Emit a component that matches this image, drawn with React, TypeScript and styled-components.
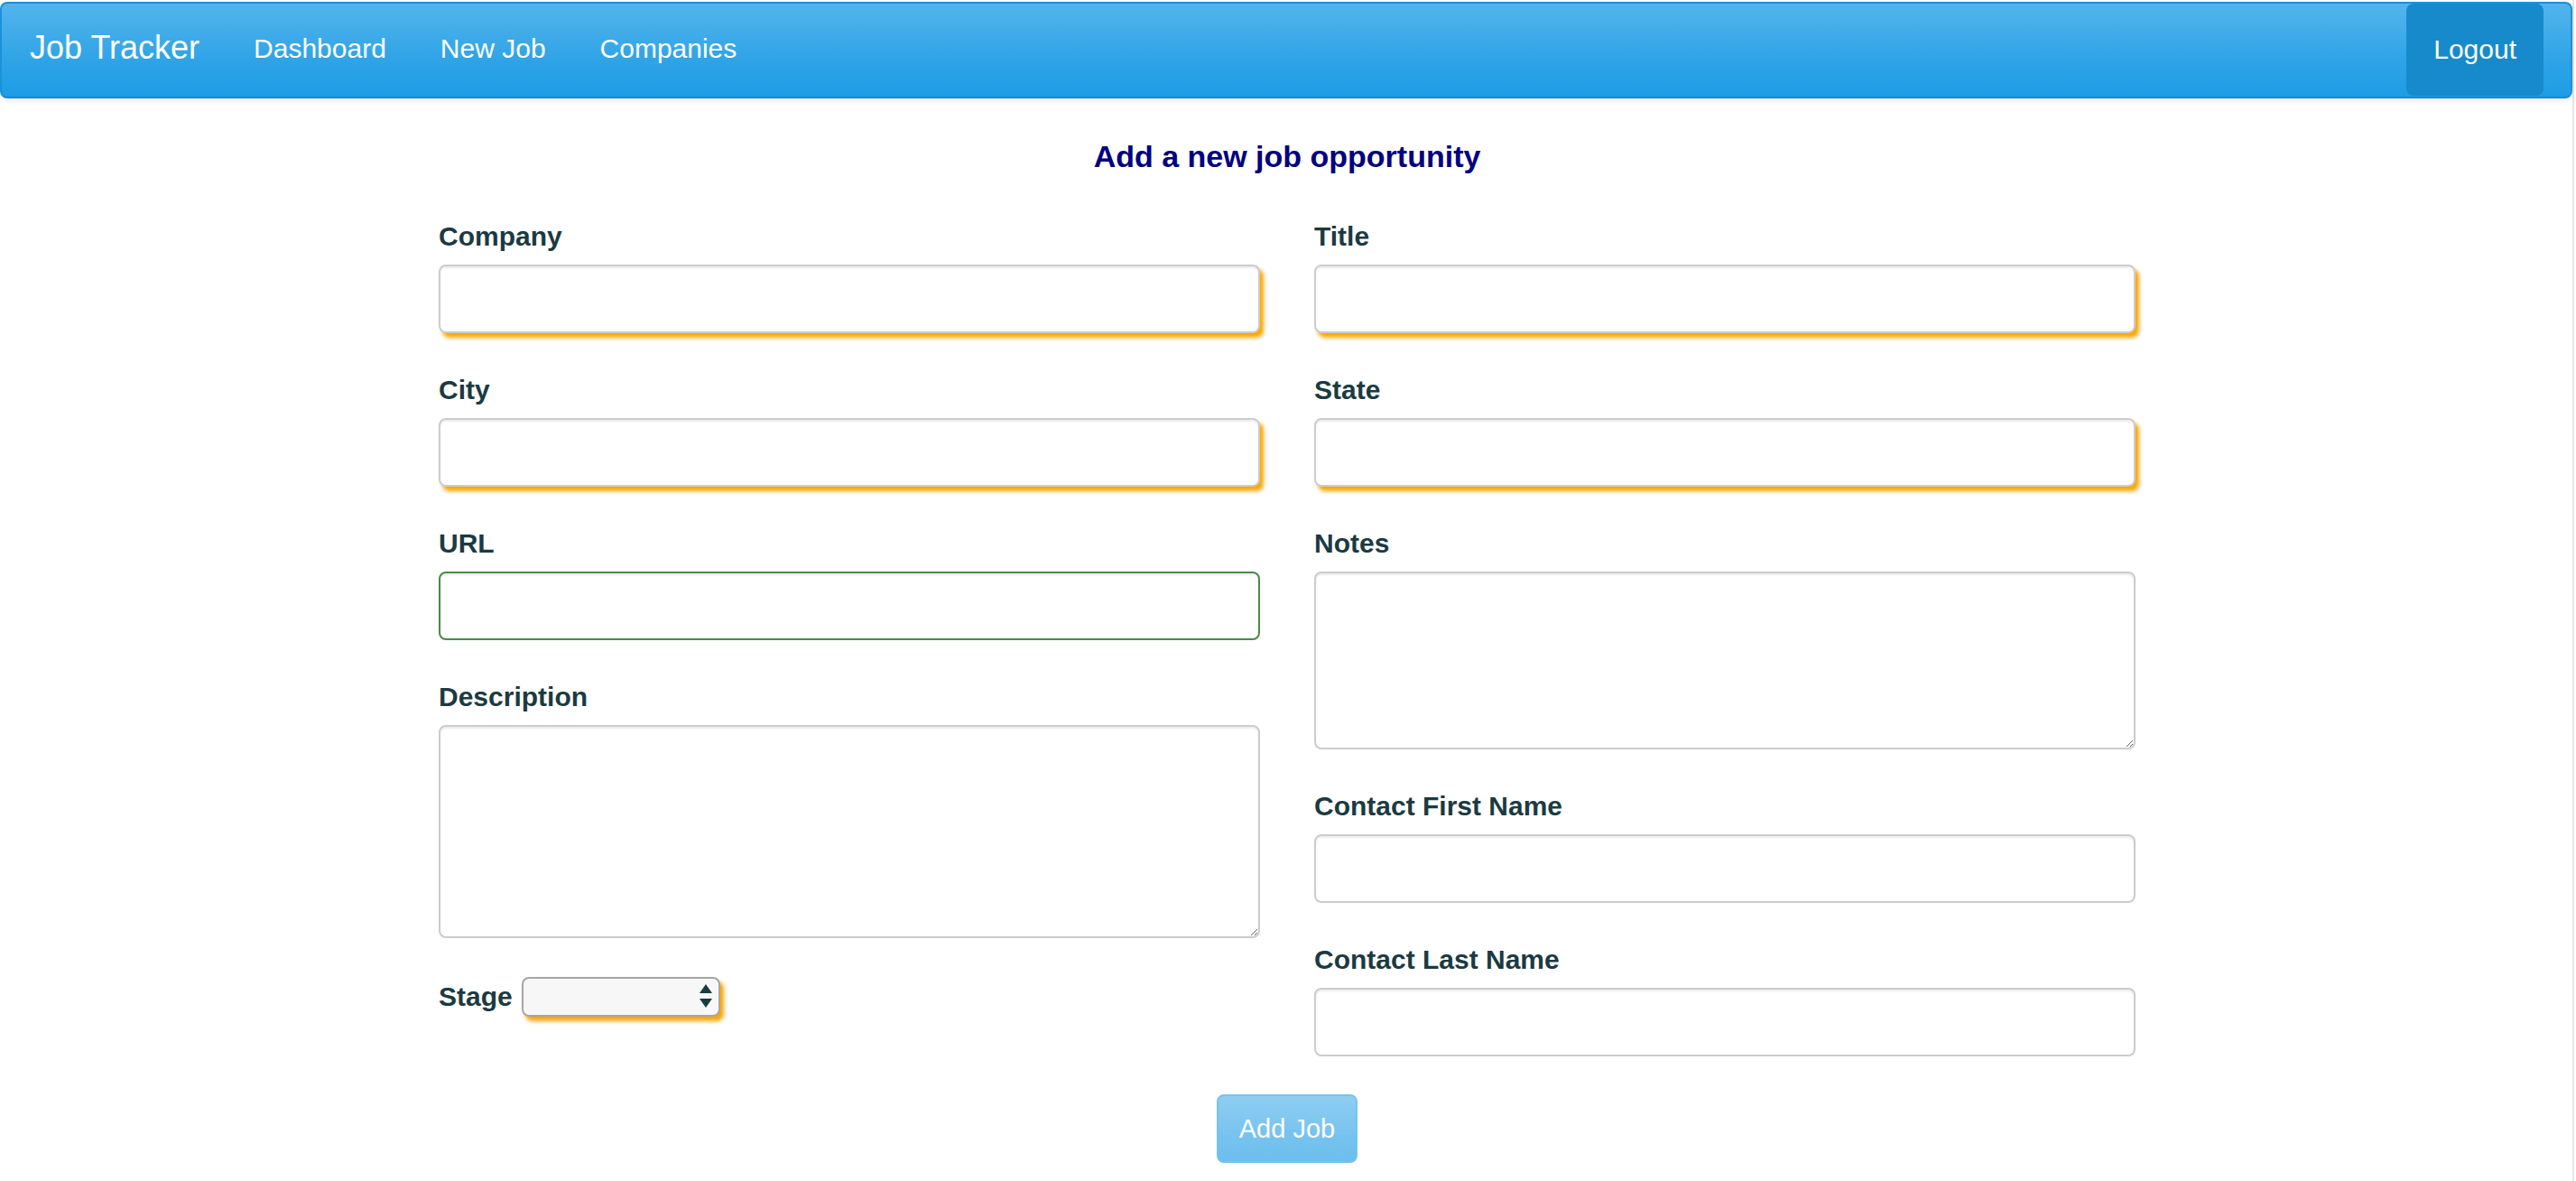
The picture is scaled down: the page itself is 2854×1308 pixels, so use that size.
import React from 'react';
import styled, { createGlobalStyle, css } from 'styled-components';

const GlobalStyle = createGlobalStyle`
  html, body {
    margin: 0;
    padding: 0;
    background: #fff;
  }
  body {
    font-family: 'Liberation Sans', Arial, Helvetica, sans-serif;
    color: #1b3a41;
  }
  * {
    box-sizing: border-box;
  }
`;

const navLinks = ['Dashboard', 'New Job', 'Companies'];

interface FieldProps {
  label: string;
  glow?: boolean;
  success?: boolean;
  height?: number;
}

const Field = ({ label, glow = false, success = false, height }: FieldProps) => (
  <Group>
    <Label>{label}</Label>
    {height ? (
      <TextArea $height={height} />
    ) : (
      <Input type="text" $glow={glow} $success={success} />
    )}
  </Group>
);

const App = () => {
  return (
    <Page>
      <GlobalStyle />
      <Navbar>
        <Brand>Job Tracker</Brand>
        <NavList>
          {navLinks.map((link) => (
            <NavItem key={link}>{link}</NavItem>
          ))}
        </NavList>
        <Logout>Logout</Logout>
      </Navbar>
      <Main>
        <Heading>Add a new job opportunity</Heading>
        <Form onSubmit={(e) => e.preventDefault()}>
          <Columns>
            <Column>
              <Field label="Company" glow />
              <Field label="City" glow />
              <Field label="URL" success />
              <Field label="Description" height={236} />
              <StageRow>
                <InlineLabel>Stage</InlineLabel>
                <SelectWrap>
                  <Select defaultValue="">
                    <option value="" />
                    <option value="applied">Applied</option>
                    <option value="interview">Interview</option>
                    <option value="offer">Offer</option>
                  </Select>
                  <Arrows width="16" height="30" viewBox="0 0 16 30">
                    <path d="M8 1 L15 11 L1 11 Z" fill="#1b3a41" />
                    <path d="M1 17 L15 17 L8 27 Z" fill="#1b3a41" />
                  </Arrows>
                </SelectWrap>
              </StageRow>
            </Column>
            <Column>
              <Field label="Title" glow />
              <Field label="State" glow />
              <Field label="Notes" height={197} />
              <Field label="Contact First Name" />
              <Field label="Contact Last Name" />
            </Column>
          </Columns>
          <ButtonRow>
            <AddButton type="submit" disabled>
              Add Job
            </AddButton>
          </ButtonRow>
        </Form>
      </Main>
    </Page>
  );
};

export default App;

const Page = styled.div`
  width: 2852px;
  min-height: 100vh;
  padding-top: 2px;
  border-right: 2px solid #e6e6e6;
`;

const Navbar = styled.nav`
  display: flex;
  align-items: stretch;
  width: 2850px;
  height: 107px;
  background-image: linear-gradient(#54b4eb, #2fa4e7 60%, #1d9ce5);
  border: 2px solid #1a91d9;
  border-bottom-color: #178acc;
  border-radius: 8px;
  box-shadow: 0 3px 6px rgba(0, 0, 0, 0.08);
`;

const Brand = styled.a`
  display: flex;
  align-items: center;
  padding: 0 30px 5px 31px;
  font-size: 36px;
  color: #fff;
  text-decoration: none;
  cursor: pointer;
`;

const NavList = styled.ul`
  display: flex;
  flex: 1;
  margin: 0;
  padding: 0;
  list-style: none;
`;

const NavItem = styled.li`
  display: flex;
  align-items: center;
  padding: 0 30px 4px;
  font-size: 30px;
  color: #fff;
  cursor: pointer;
`;

const Logout = styled.a`
  display: flex;
  align-items: center;
  margin: 0 30px 1px 0;
  padding: 0 30px;
  font-size: 30px;
  color: #fff;
  background: #178acc;
  border-radius: 8px;
  cursor: pointer;
`;

const Main = styled.main`
  padding: 46px 0 0 2px;
`;

const Heading = styled.h3`
  margin: 0 0 49px;
  font-size: 34px;
  line-height: 1.1;
  font-weight: 700;
  color: #000080;
  text-align: center;
`;

const Form = styled.form`
  display: flex;
  flex-direction: column;
  align-items: center;
`;

const Columns = styled.div`
  display: grid;
  grid-template-columns: 910px 910px;
  column-gap: 60px;
`;

const Column = styled.div`
  display: flex;
  flex-direction: column;
`;

const Group = styled.div`
  display: flex;
  flex-direction: column;
  margin-bottom: 42.5px;
`;

const Label = styled.label`
  margin-bottom: 9.5px;
  font-size: 30px;
  line-height: 42px;
  font-weight: 700;
  color: #1b3a41;
`;

const fieldBase = css`
  width: 100%;
  border: 2px solid #ccc;
  border-radius: 8px;
  background: #fff;
  font-family: inherit;
  font-size: 30px;
  padding: 12px 24px;
  outline: none;
`;

const orangeGlow = '4px 5px 4px #ffa500';
const insetShadow = 'inset 0 2px 2px rgba(0, 0, 0, 0.075)';

const Input = styled.input<{ $glow: boolean; $success: boolean }>`
  ${fieldBase}
  height: 76px;
  box-shadow: ${({ $glow }) =>
    $glow ? `${insetShadow}, ${orangeGlow}` : insetShadow};
  ${({ $success }) =>
    $success &&
    css`
      border-color: #4b8a48;
    `}
`;

const TextArea = styled.textarea<{ $height: number }>`
  ${fieldBase}
  height: ${({ $height }) => $height}px;
  box-shadow: ${insetShadow};
  resize: vertical;
`;

const StageRow = styled.div`
  display: flex;
  align-items: center;
  gap: 10px;
  margin-top: 1px;
`;

const InlineLabel = styled.label`
  font-size: 30px;
  line-height: 42px;
  font-weight: 700;
  color: #1b3a41;
`;

const SelectWrap = styled.div`
  position: relative;
  width: 220px;
  height: 44px;
`;

const Select = styled.select`
  appearance: none;
  width: 100%;
  height: 100%;
  border: 2px solid #a6a6a6;
  border-radius: 8px;
  background: #f7f7f7;
  box-shadow: ${orangeGlow};
  font-family: inherit;
  font-size: 24px;
  outline: none;
`;

const Arrows = styled.svg`
  position: absolute;
  top: 7px;
  right: 8px;
  pointer-events: none;
`;

const ButtonRow = styled.div`
  display: flex;
  justify-content: center;
`;

const AddButton = styled.button`
  width: 156px;
  height: 76px;
  padding: 0;
  font-family: inherit;
  font-size: 29px;
  color: #fff;
  background-image: linear-gradient(#54b4eb, #2fa4e7 60%, #1d9ce5);
  border: 2px solid #2fa4e7;
  border-radius: 8px;
  opacity: 0.65;
  cursor: not-allowed;
`;
